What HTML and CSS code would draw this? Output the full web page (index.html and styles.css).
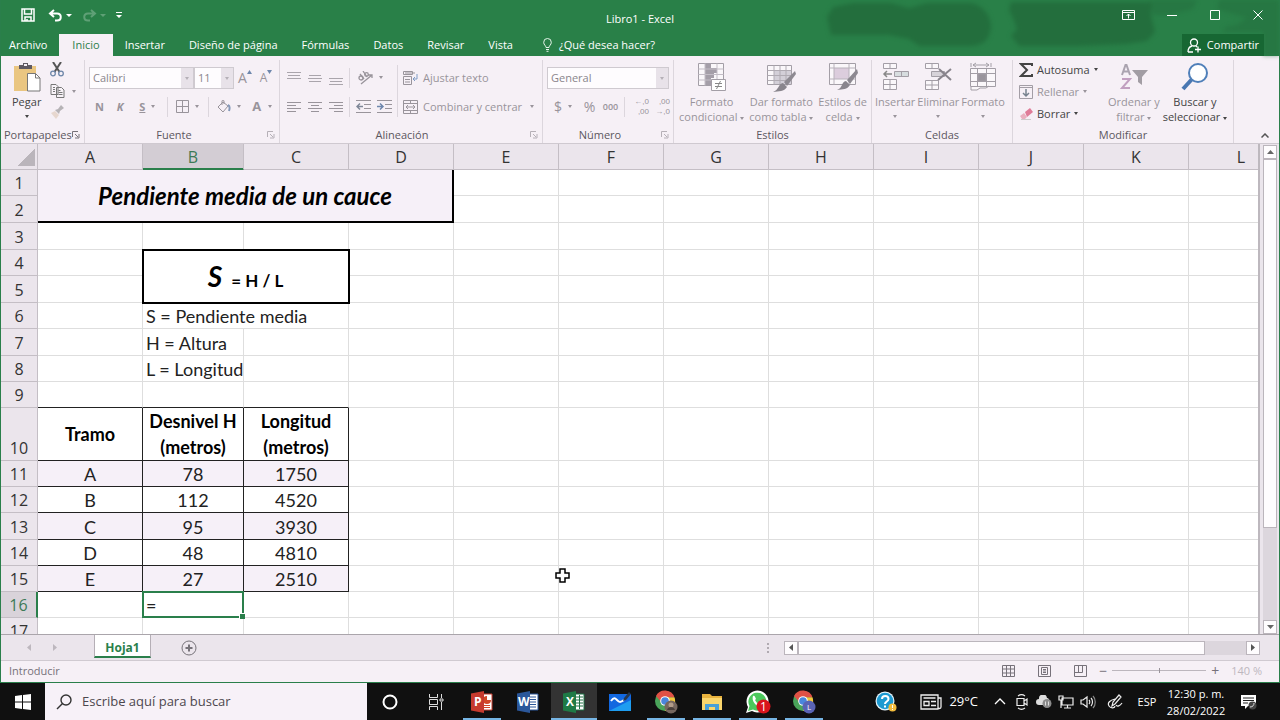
FILE: index.html
```html
<!DOCTYPE html>
<html lang="es">
<head>
  <meta charset="UTF-8">
  <meta name="viewport" content="width=device-width, initial-scale=1.0">
  <title>Libro1 - Excel</title>
  <link rel="stylesheet" href="styles.css">
</head>
<body>
  <div class="window">
    <!-- Barra de título -->
    <header class="top">
      <svg class="clouds" width="480" height="56" viewBox="0 0 480 56" fill="#236e3d"><path d="M34 7l20-4h38l18 5 18-5h44c12 2 20 13 20 24-2 14-8 18-20 19h-52l-10-7-20-4H32l-4-18z"/><path d="M212 2h140v14l4 16-8 9-20 3-48 2h-60l-8-10 6-7-4-11-4-8z"/><path d="M350 0h48l-4 9-24 6h-16zM420 0h60v56h-16V32h-40c0-4 6-7 12-6l12-8-30-9z" opacity="0.5"/></svg>
      <div class="title-bar">
        <div class="quick">
          <button class="save" aria-label="Guardar"><svg width="14" height="14" viewBox="0 0 14 14" fill="none" stroke="#fff" stroke-width="1.5"><path d="M1 1h12v12H1zM3.500 1v5h7V1M4 13V9h6v4M6 11v2"/></svg></button>
          <button class="undo" aria-label="Deshacer"><svg width="15" height="13" viewBox="0 0 15 13" fill="none" stroke="#fff" stroke-width="2"><path d="M6 1L2 4.500L6 8M2 4.500h7c5 0 5 7 0 7H7"/></svg><i class="caret"></i></button>
          <button class="undo dim" aria-label="Rehacer"><svg width="15" height="13" viewBox="0 0 15 13" fill="none" stroke="#fff" stroke-width="2"><path d="M9 1l4 3.500L9 8M13 4.500H6c-5 0-5 7 0 7h2"/></svg><i class="caret"></i></button>
          <button aria-label="Personalizar"><svg width="6" height="8" viewBox="0 0 6 8" fill="#fff"><path d="M0 1h6v1H0zM0 4h6L3 7z"/></svg></button>
        </div>
        <div class="doc-name">Libro1 - Excel</div>
        <div class="win-buttons">
          <button aria-label="Opciones de cinta"><svg width="13" height="10" viewBox="0 0 13 10" fill="none" stroke="#fff"><path d="M.5.5h12v9H.5zM.5 2.500h12M6.500 8.500V4M4.500 6l2-2 2 2"/></svg></button>
          <button aria-label="Minimizar"><svg width="10" height="10" viewBox="0 0 10 10" stroke="#fff"><path d="M0 5.500h10"/></svg></button>
          <button aria-label="Maximizar"><svg width="10" height="10" viewBox="0 0 10 10" fill="none" stroke="#fff"><path d="M.5.5h9v9h-9z"/></svg></button>
          <button aria-label="Cerrar"><svg width="10" height="10" viewBox="0 0 10 10" stroke="#fff"><path d="M.5.5l9 9M9.500.5l-9 9"/></svg></button>
        </div>
      </div>
      <nav class="tabs">
        <a href="#" class="file">Archivo</a>
        <a href="#" class="active">Inicio</a>
        <a href="#">Insertar</a>
        <a href="#">Diseño de página</a>
        <a href="#">Fórmulas</a>
        <a href="#">Datos</a>
        <a href="#">Revisar</a>
        <a href="#">Vista</a>
        <a href="#" class="tell"><svg width="9" height="14" viewBox="0 0 9 14" fill="none" stroke="#e6f3ea"><path d="M3 9.500C3 7.500.7 7 .7 4.300a3.800 3.800 0 0 1 7.600 0C8.300 7 6 7.500 6 9.500zM3 11.500h3M3.500 13.300h2"/></svg>¿Qué desea hacer?</a>
        <button class="share"><svg width="15" height="15" viewBox="0 0 15 15" fill="none" stroke="#fff" stroke-width="1.300"><circle cx="7" cy="4.500" r="3.500"/><path d="M1 14c0-4 2-5.500 4-6M1 14h5M9 8l1 1M11 8.500v6M8 11.500h6"/></svg>Compartir</button>
      </nav>
    </header>

    <!-- Cinta de opciones -->
    <section class="ribbon">
      <div class="group g-clip">
        <div class="group-body">
          <button class="big dark paste"><svg width="28" height="30" viewBox="0 0 28 30"><path d="M1 4h22v25H1z" fill="#eac681"/><path d="M6 3h4V1h5v2h4v4H6z" fill="#5f5a62"/><path d="M11 2h3v2h-3z" fill="#f5eff5"/><path d="M14.500 11.500h8l4.500 4.500v13H14.500z" fill="#fff" stroke="#777"/><path d="M22.500 11.500V16H27" fill="none" stroke="#777"/></svg><span>Pegar</span><i class="caret"></i></button>
          <div class="stack">
            <button aria-label="Cortar"><svg width="14" height="15" viewBox="0 0 14 15" fill="none"><path d="M3 0l6.500 10M11 0L4.500 10" stroke="#555" stroke-width="2"/><circle cx="3" cy="11.500" r="2.300" stroke="#6d86a8" stroke-width="1.300"/><circle cx="11" cy="11.500" r="2.300" stroke="#6d86a8" stroke-width="1.300"/></svg></button>
            <button aria-label="Copiar"><svg width="15" height="14" viewBox="0 0 15 14" fill="#f8f3f8" stroke="#777"><path d="M1 .5h5l2 2v8H1zM6.500 3.500h5l2.500 2.500v7.500H6.500z"/><path d="M3 3.500h2M3 5.500h2M3 7.500h2M8.500 6.500h2M8.500 8.500h4M8.500 10.500h4"/></svg><i class="caret"></i></button>
            <button class="dim" aria-label="Copiar formato"><svg width="14" height="14" viewBox="0 0 14 14"><path d="M1 8l4-2 4 4-3 4z" fill="#d9c0a9"/><path d="M5 5l3-1 3-4 3 3-4 3-1 3z" fill="#777"/></svg></button>
          </div>
        </div>
        <div class="group-label">Portapapeles<svg class="launch" viewBox="0 0 8 8"><path d="M.5 6V.5H6M3 3l3 3M7 3v4H3"/></svg></div>
      </div>

      <div class="group g-font">
        <div class="group-body rows">
          <div class="row">
            <span class="combo font-name"><select aria-label="Fuente" disabled><option>Calibri</option></select></span><span class="combo font-size"><select aria-label="Tamaño" disabled><option>11</option></select></span>
            <button class="size-btn" aria-label="Aumentar"><span class="grow">A</span><svg width="5" height="4" viewBox="0 0 5 4"><path d="M0 4l2.500-4L5 4z" fill="#6e87ad"/></svg></button>
            <button class="size-btn" aria-label="Reducir"><span>A</span><svg width="5" height="4" viewBox="0 0 5 4"><path d="M0 0h5L2.500 4z" fill="#6e87ad"/></svg></button>
          </div>
          <div class="row">
            <button class="b20"><b>N</b></button>
            <button class="b20"><b><em>K</em></b></button>
            <button class="b34"><b><u>S</u></b><i class="caret"></i></button>
            <span class="sep"></span>
            <button class="b34" aria-label="Bordes"><svg width="13" height="13" viewBox="0 0 13 13" fill="none" stroke="#99949b"><path d="M.5.5h12v12H.5zM6.500.5v12M.5 6.500h12"/></svg><i class="caret"></i></button>
            <span class="sep"></span>
            <button class="b34" aria-label="Relleno"><svg width="14" height="13" viewBox="0 0 14 13" fill="none" stroke="#99949b"><path d="M1 7l5-5 5 4-5 6zM5 5V1c0-1 2-1 2 0v3"/><path d="M11 5c2 1 2 3 1 6" stroke="#8498b8" stroke-width="2"/></svg><i class="caret"></i></button>
            <button class="b30"><b class="font-a">A</b><i class="caret"></i></button>
          </div>
        </div>
        <div class="group-label">Fuente<svg class="launch dim" viewBox="0 0 8 8"><path d="M.5 6V.5H6M3 3l3 3M7 3v4H3"/></svg></div>
      </div>

      <div class="group g-align">
        <div class="group-body">
          <div class="rows">
            <div class="row v-align">
              <button class="b20" aria-label="Arriba"><svg width="14" height="14" viewBox="0 0 14 14" stroke="#aaa5ac"><path d="M0 1.500h14M1 4.500h12M0 7.500h14"/></svg></button>
              <button class="b20" aria-label="Medio"><svg width="14" height="14" viewBox="0 0 14 14" stroke="#aaa5ac"><path d="M1 4.500h12M0 7.500h14M1 10.500h12"/></svg></button>
              <button class="b20" aria-label="Abajo"><svg width="14" height="14" viewBox="0 0 14 14" stroke="#aaa5ac"><path d="M0 7.500h14M1 10.500h12M0 13.500h14"/></svg></button>
              <span class="sep"></span>
              <button class="b34" aria-label="Orientación"><svg width="15" height="14" viewBox="0 0 15 14" fill="none" stroke="#99949b" stroke-width="1.300"><path d="M3 13L14 4M10 4h4v3"/><circle cx="3" cy="7" r="2"/><path d="M2 3l4 5M5 0l4 6"/><circle cx="8.500" cy="3.500" r="1.800"/></svg><i class="caret"></i></button>
            </div>
            <div class="row">
              <button class="b20" aria-label="Izquierda"><svg width="14" height="12" viewBox="0 0 14 12" stroke="#99949b"><path d="M0 1.500h14M0 4.500h9M0 7.500h14M0 10.500h9"/></svg></button>
              <button class="b20" aria-label="Centro"><svg width="14" height="12" viewBox="0 0 14 12" stroke="#99949b"><path d="M0 1.500h14M3 4.500h8M0 7.500h14M3 10.500h8"/></svg></button>
              <button class="b20" aria-label="Derecha"><svg width="14" height="12" viewBox="0 0 14 12" stroke="#99949b"><path d="M0 1.500h14M5 4.500h9M0 7.500h14M5 10.500h9"/></svg></button>
              <span class="sep"></span>
              <button class="b20" aria-label="Menos sangría"><svg width="15" height="13" viewBox="0 0 15 13" fill="none" stroke="#99949b"><path d="M0 .5h15M8 4.500h7M8 8.500h7M0 12.500h15"/><path d="M7 6.500H1M4 3.500l-3 3 3 3" stroke="#7f8798" stroke-width="1.500"/></svg></button>
              <button class="b20" aria-label="Más sangría"><svg width="15" height="13" viewBox="0 0 15 13" fill="none" stroke="#99949b"><path d="M0 .5h15M8 4.500h7M8 8.500h7M0 12.500h15"/><path d="M0 6.500h6M3 3.500l3 3-3 3" stroke="#6e87ad" stroke-width="1.500"/></svg></button>
            </div>
          </div>
          <span class="sep tall"></span>
          <div class="rows">
            <button class="row text-btn"><svg width="15" height="14" viewBox="0 0 15 14" fill="none" stroke="#99949b"><path d="M.5.5h9v3h-9zM2 2h10M.5 5.500h8v8h-8zM2 8.500h5M2 11h5"/><path d="M14 3v5h-4M12 6l-2 2 2 2" stroke="#7f9bc4"/></svg>Ajustar texto</button>
            <button class="row text-btn"><svg width="15" height="14" viewBox="0 0 15 14" fill="none" stroke="#99949b"><path d="M.5.5h14v13H.5zM.5 3.500h14M.5 10.500h14M7.500.5v3M7.500 10.500v3M3 7h9M5 5L3 7l2 2M10 5l2 2-2 2"/></svg>Combinar y centrar<i class="caret"></i></button>
          </div>
        </div>
        <div class="group-label">Alineación<svg class="launch dim" viewBox="0 0 8 8"><path d="M.5 6V.5H6M3 3l3 3M7 3v4H3"/></svg></div>
      </div>

      <div class="group g-number">
        <div class="group-body rows">
          <div class="row"><span class="combo format"><select aria-label="Formato de número" disabled><option>General</option></select></span></div>
          <div class="row">
            <button class="b34 money">$<i class="caret"></i></button>
            <button class="b20 percent">%</button>
            <button class="b20 zeros">000</button>
            <span class="sep"></span>
            <button class="b20 decimals"><span>←,0</span><span>,00</span></button>
            <button class="b20 decimals"><span>,00</span><span>→,0</span></button>
          </div>
        </div>
        <div class="group-label">Número<svg class="launch dim" viewBox="0 0 8 8"><path d="M.5 6V.5H6M3 3l3 3M7 3v4H3"/></svg></div>
      </div>

      <div class="group g-styles">
        <div class="group-body">
          <button class="big"><svg width="30" height="30" viewBox="0 0 30 30"><path d="M1.500 1.500h25v22h-25z" fill="#faf7fa" stroke="#a39ea6"/><path d="M8 1h6v22H8zM14 6h6v5h-6zM14 11h3v5h-3z" fill="#a49ea8"/><path d="M1.500 7h25M1.500 12.500h25M1.500 18h25M8 1.500v22M20 1.500v22" stroke="#c3bdc6" fill="none"/><path d="M14.500 17.500h14v11h-14z" fill="#fff" stroke="#a39ea6"/><path d="M18 21.500h7M18 24.500h7M23.500 19l-4 8" stroke="#888" fill="none"/></svg><span>Formato</span><span>condicional <i class="caret"></i></span></button>
          <button class="big"><svg width="30" height="30" viewBox="0 0 30 30"><path d="M1.500 3.500h24v19h-24z" fill="#faf7fa" stroke="#a39ea6"/><path d="M8 9h17v13H8z" fill="#d3cfd8"/><path d="M1.500 8.500h24M1.500 13.500h24M1.500 18.500h24M8 3.500v19M14 3.500v19M20 3.500v19" stroke="#b0abb3" fill="none"/><path d="M29 9L18 20l3 4L30 12z" fill="#8d8991"/><path d="M17 21l4 4c-3 5-8 4-14 5 6-2 5-8 10-9z" fill="#89858d"/></svg><span>Dar formato</span><span>como tabla <i class="caret"></i></span></button>
          <button class="big"><svg width="30" height="30" viewBox="0 0 30 30"><path d="M1.500 1.500h26v21h-26z" fill="#faf7fa" stroke="#a39ea6"/><path d="M6 6h15v11H6z" fill="#dccddd"/><path d="M1.500 6h26M1.500 17h26M6 1.500v21M21 1.500v21" stroke="#b8b2bb" fill="none"/><path d="M29 7L19 18l3 4L30 11z" fill="#8d8991"/><path d="M18 19l4 4c-3 5-7 4-13 5 6-2 4-8 9-9z" fill="#89858d"/></svg><span>Estilos de</span><span>celda <i class="caret"></i></span></button>
        </div>
        <div class="group-label">Estilos</div>
      </div>

      <div class="group g-cells">
        <div class="group-body">
          <button class="big"><svg width="28" height="30" viewBox="0 0 28 30" fill="#faf7fa" stroke="#a39ea6"><path d="M2.500 1.500h13v5h-13zM9 1.500v5M2.500 17.500h13v10h-13zM2.500 22.500h13M9 17.500v10"/><path d="M13.500 9.500h14v5h-14zM20.500 9.500v5" fill="#d7dddf"/><path d="M11 12H3M6 9l-3 3 3 3" fill="none" stroke="#888" stroke-width="1.500"/></svg><span>Insertar</span><i class="caret"></i></button>
          <button class="big"><svg width="28" height="30" viewBox="0 0 28 30" fill="#faf7fa" stroke="#a39ea6"><path d="M1.500 1.500h13v5h-13zM8 1.500v5M1.500 18.500h13v9h-13zM1.500 23h13M8 18.500v9"/><path d="M7.500 9.500h13v5h-13z" fill="#d7d3d9"/><path d="M15 7l12 11M27 7L14 18" fill="none" stroke="#88848c" stroke-width="2"/></svg><span>Eliminar</span><i class="caret"></i></button>
          <button class="big"><svg width="28" height="30" viewBox="0 0 28 30" fill="#faf7fa" stroke="#a39ea6"><path d="M1.500 6.500h25v18h-25zM1.500 11.500h25M1.500 19.500h25M8.500 6.500v18M17.500 6.500v18M2 25v3h6l3-2h6l3-2M2 1v4M22 1v4M4 3h16M7 1L4 3l3 2M17 1l3 2-3 2"/><path d="M9 12h8v7H9z" fill="#99949c"/></svg><span>Formato</span><i class="caret"></i></button>
        </div>
        <div class="group-label">Celdas</div>
      </div>

      <div class="group g-edit">
        <div class="group-body">
          <div class="edit-list">
            <button class="dark"><svg width="14" height="14" viewBox="0 0 14 14" fill="none" stroke="#444" stroke-width="2"><path d="M13 3V1H2l6 6-6 6h11v-2"/></svg>Autosuma<i class="caret"></i></button>
            <button><svg width="14" height="14" viewBox="0 0 14 14" fill="none" stroke="#a39ea6"><path d="M.5.5h13v13H.5zM.5 2.500h13"/><path d="M7 4v7M4 8l3 3 3-3" stroke="#77828f" stroke-width="1.500"/></svg>Rellenar<i class="caret"></i></button>
            <button class="dark"><svg width="14" height="14" viewBox="0 0 14 14"><path d="M6 5l5-4 3 4-6 5z" fill="#df7c98"/><path d="M1 9l4-3 3 4-2 2H3z" fill="#e9b0bf"/><path d="M2 12.500h10" stroke="#ccc"/></svg>Borrar<i class="caret"></i></button>
          </div>
          <button class="big"><svg width="28" height="30" viewBox="0 0 28 30" fill="none"><path d="M2 13L5.500 3h1L10 13M3.500 9.500h5" stroke="#aaa3af" stroke-width="2"/><path d="M2 17h8L2 26h8" stroke="#c19fc0" stroke-width="2"/><path d="M12 8h16l-6 7v8l-4-3v-5z" fill="#a29da4"/></svg><span>Ordenar y</span><span>filtrar <i class="caret"></i></span></button>
          <button class="big dark"><svg width="28" height="30" viewBox="0 0 28 30"><path d="M2 27L12 16" stroke="#4977b1" stroke-width="4"/><circle cx="17" cy="11" r="9" fill="#fff" stroke="#4f7fb9" stroke-width="2"/></svg><span>Buscar y</span><span>seleccionar <i class="caret"></i></span></button>
        </div>
        <div class="group-label">Modificar</div>
      </div>
      <button class="collapse" aria-label="Contraer"><svg width="8" height="5" viewBox="0 0 8 5" fill="none" stroke="#555" stroke-width="1.500"><path d="M.5 4.500L4 1l3.500 3.500"/></svg></button>
    </section>

    <!-- Hoja de cálculo -->
    <main class="sheet">
      <div class="grid-wrap">
        <table class="grid">
          <colgroup><col class="c-num"><col class="c"><col class="c-b"><col class="c"><col class="c"><col class="c"><col class="c"><col class="c"><col class="c"><col class="c"><col class="c"><col class="c"><col class="c"></colgroup>
          <thead>
            <tr><th class="corner"></th><th>A</th><th class="sel">B</th><th>C</th><th>D</th><th>E</th><th>F</th><th>G</th><th>H</th><th>I</th><th>J</th><th>K</th><th>L</th></tr>
          </thead>
          <tbody>
            <tr><th>1</th><td class="sheet-title" colspan="4" rowspan="2">Pendiente media de un cauce</td><td></td><td></td><td></td><td></td><td></td><td></td><td></td><td></td></tr>
            <tr class="h27"><th>2</th><td></td><td></td><td></td><td></td><td></td><td></td><td></td><td></td></tr>
            <tr class="h27"><th>3</th><td></td><td></td><td></td><td></td><td></td><td></td><td></td><td></td><td></td><td></td><td></td><td></td></tr>
            <tr><th>4</th><td></td><td class="formula" colspan="2" rowspan="2"><em>S</em> = H / L</td><td></td><td></td><td></td><td></td><td></td><td></td><td></td><td></td><td></td></tr>
            <tr class="h27"><th>5</th><td></td><td></td><td></td><td></td><td></td><td></td><td></td><td></td><td></td><td></td></tr>
            <tr><th>6</th><td></td><td class="left" colspan="2">S = Pendiente media</td><td></td><td></td><td></td><td></td><td></td><td></td><td></td><td></td><td></td></tr>
            <tr class="h27"><th>7</th><td></td><td class="left">H = Altura</td><td></td><td></td><td></td><td></td><td></td><td></td><td></td><td></td><td></td><td></td></tr>
            <tr><th>8</th><td></td><td class="left">L = Longitud</td><td></td><td></td><td></td><td></td><td></td><td></td><td></td><td></td><td></td><td></td></tr>
            <tr class="above"><th>9</th><td></td><td></td><td></td><td></td><td></td><td></td><td></td><td></td><td></td><td></td><td></td><td></td></tr>
            <tr class="data head"><th>10</th><td>Tramo</td><td>Desnivel H<br>(metros)</td><td>Longitud<br>(metros)</td><td></td><td></td><td></td><td></td><td></td><td></td><td></td><td></td><td></td></tr>
            <tr class="data tint"><th>11</th><td>A</td><td>78</td><td>1750</td><td></td><td></td><td></td><td></td><td></td><td></td><td></td><td></td><td></td></tr>
            <tr class="data"><th>12</th><td>B</td><td>112</td><td>4520</td><td></td><td></td><td></td><td></td><td></td><td></td><td></td><td></td><td></td></tr>
            <tr class="data tint h27"><th>13</th><td>C</td><td>95</td><td>3930</td><td></td><td></td><td></td><td></td><td></td><td></td><td></td><td></td><td></td></tr>
            <tr class="data"><th>14</th><td>D</td><td>48</td><td>4810</td><td></td><td></td><td></td><td></td><td></td><td></td><td></td><td></td><td></td></tr>
            <tr class="data tint"><th>15</th><td>E</td><td>27</td><td>2510</td><td></td><td></td><td></td><td></td><td></td><td></td><td></td><td></td><td></td></tr>
            <tr><th class="sel-row">16</th><td></td><td class="left editing">=</td><td></td><td></td><td></td><td></td><td></td><td></td><td></td><td></td><td></td><td></td></tr>
            <tr><th>17</th><td></td><td></td><td></td><td></td><td></td><td></td><td></td><td></td><td></td><td></td><td></td><td></td></tr>
          </tbody>
        </table>
        <svg class="pointer" width="15" height="15" viewBox="0 0 15 15"><path d="M5 1h5v4h4v5h-4v4H5v-4H1V5h4z" fill="#fff" stroke="#000" stroke-width="1.500"/></svg>
      </div>
      <div class="v-scroll">
        <button aria-label="Subir"><svg width="7" height="4" viewBox="0 0 7 4"><path d="M0 4l3.500-4L7 4z" fill="#666"/></svg></button>
        <div class="thumb"></div>
        <div class="track"></div>
        <button aria-label="Bajar"><svg width="7" height="4" viewBox="0 0 7 4"><path d="M0 0h7L3.500 4z" fill="#666"/></svg></button>
      </div>
    </main>

    <div class="sheet-tabs">
      <div class="arrows"><svg width="4" height="7" viewBox="0 0 4 7"><path d="M4 0v7L0 3.500z"/></svg><svg width="4" height="7" viewBox="0 0 4 7"><path d="M0 0v7l4-3.500z"/></svg></div>
      <button class="sheet-tab">Hoja1</button>
      <button class="add" aria-label="Hoja nueva"><svg width="16" height="16" viewBox="0 0 16 16" fill="none" stroke="#77737a"><circle cx="8" cy="8" r="7"/><path d="M8 4.500v7M4.500 8h7" stroke-width="2"/></svg></button>
      <div class="h-scroll">
        <svg class="grip" width="2" height="10" viewBox="0 0 2 10"><path d="M0 0h2v2H0zM0 4h2v2H0zM0 8h2v2H0z"/></svg>
        <button aria-label="Izquierda"><svg width="4" height="7" viewBox="0 0 4 7"><path d="M4 0v7L0 3.500z" fill="#555"/></svg></button>
        <div class="thumb"></div>
        <div class="track"></div>
        <button aria-label="Derecha"><svg width="4" height="7" viewBox="0 0 4 7"><path d="M0 0v7l4-3.500z" fill="#555"/></svg></button>
      </div>
    </div>

    <footer class="status">
      <span>Introducir</span>
      <div class="views">
        <button aria-label="Normal"><svg width="13" height="12" viewBox="0 0 13 12" fill="none" stroke="#77727a"><path d="M.5.5h12v11H.5zM.5 4h12M.5 8h12M4.500.5v11M8.500.5v11"/></svg></button>
        <button aria-label="Diseño"><svg width="13" height="12" viewBox="0 0 13 12" fill="none" stroke="#77727a"><path d="M.5.5h12v11H.5zM3.500 2.500h6v7h-6zM5 4.500h3M5 6h3M5 7.500h3"/></svg></button>
        <button aria-label="Saltos"><svg width="13" height="12" viewBox="0 0 13 12" fill="none" stroke="#77727a"><path d="M.5.5h12v11H.5zM.5 7.500h8v-7M4.500.5v7"/></svg></button>
      </div>
      <div class="zoom">
        <button>−</button><input type="range" min="0" max="100" value="50" aria-label="Zoom"><button>+</button>
      </div>
      <span class="zoom-value">140 %</span>
    </footer>
  </div>

  <!-- Barra de tareas -->
  <div class="taskbar">
    <button class="start" aria-label="Inicio"><svg width="16" height="16" viewBox="0 0 16 16" fill="#fff"><path d="M0 2l7-1v6.500H0zM8 1l8-1v7.500H8zM0 8.500h7V15l-7-1zM8 8.500h8V16l-8-1z"/></svg></button>
    <label class="search"><svg width="16" height="16" viewBox="0 0 16 16" fill="none" stroke="#333" stroke-width="1.400"><circle cx="10" cy="6" r="5"/><path d="M6.500 9.500L1 15"/></svg><input type="text" placeholder="Escribe aquí para buscar" aria-label="Buscar"></label>
    <button class="app" aria-label="Cortana"><svg width="16" height="16" viewBox="0 0 16 16" fill="none" stroke="#fff" stroke-width="2"><circle cx="8" cy="8" r="6.500"/></svg></button>
    <button class="app" aria-label="Vista de tareas"><svg width="16" height="16" viewBox="0 0 16 16" fill="none" stroke="#ddd"><path d="M1.500 0v3.500h8V0M1.500 5.500h8v5h-8zM1.500 16v-3.500h8V16M13.500 0v4M13.500 8v8M12 5h3v2h-3z"/></svg></button>
    <button class="app open" aria-label="PowerPoint"><svg width="22" height="22" viewBox="0 0 22 22"><path d="M11 3h10v16H11z" fill="#fff" stroke="#c43e31"/><path d="M16 5v4h4a4 4 0 1 1-4-4zM13 14h6v1h-6zM13 16h6v1h-6z" fill="#d24726"/><path d="M0 2.500L13 0v22L0 19.500z" fill="#c63a2e"/><text x="3" y="15" class="logo">P</text></svg></button>
    <button class="app" aria-label="Word"><svg width="22" height="22" viewBox="0 0 22 22"><path d="M11 3h10v16H11z" fill="#fff" stroke="#2b579a"/><path d="M13 6h6M13 8.500h6M13 11h6M13 13.500h6M13 16h6" stroke="#2b579a"/><path d="M0 2.500L13 0v22L0 19.500z" fill="#2b579a"/><text x="1" y="15" class="logo">W</text></svg></button>
    <button class="app open current" aria-label="Excel"><svg width="22" height="22" viewBox="0 0 22 22"><path d="M11 3h10v16H11z" fill="#fff" stroke="#1f7145"/><path d="M13 6h7M13 9h7M13 12h7M13 15h7M16.500 4v14" stroke="#1f7145"/><path d="M0 2.500L13 0v22L0 19.500z" fill="#1f7a46"/><text x="3" y="15" class="logo">X</text></svg></button>
    <button class="app" aria-label="Pizarra"><svg width="24" height="20" viewBox="0 0 24 20"><path d="M1 2h22v17H1z" fill="#1268e0"/><path d="M1 19L23 8v11z" fill="#1e9df0"/><path d="M3 9c3-4 4-3 6-1s3 3 7 0" fill="none" stroke="#fff" stroke-width="2"/><path d="M15 9l1-3 5-6 2 2-5 6z" fill="#26364c"/></svg></button>
    <button class="app open" aria-label="Chrome"><svg width="24" height="24" viewBox="0 0 24 24"><circle cx="11" cy="11" r="10" fill="#4aa45a"/><path d="M2 6a10 10 0 0 1 18.500 1.500H11L8 13z" fill="#e05145"/><path d="M20.500 7.500A10 10 0 0 1 11 21l4-8-2-5.500z" fill="#f2c83b"/><circle cx="11" cy="11" r="4.800" fill="#fff"/><circle cx="11" cy="11" r="3.800" fill="#4a86dc"/><circle cx="17" cy="17" r="6.500" fill="#76675f"/><circle cx="17" cy="15" r="2.500" fill="#b29b89"/><path d="M13 20c1-4 7-4 8 0z" fill="#493f3b"/></svg></button>
    <button class="app open" aria-label="Explorador"><svg width="22" height="20" viewBox="0 0 22 20"><path d="M1 2h8l2 2h10v14H1z" fill="#e9b33e"/><path d="M1 6h20v12H1z" fill="#fbd66d"/><path d="M4 18v-6h14v6h-4v-3H8v3z" fill="#4aa0d8"/></svg></button>
    <button class="app open" aria-label="WhatsApp"><svg width="26" height="24" viewBox="0 0 26 24"><path d="M1 23l2-6A11 11 0 1 1 7 21z" fill="#fff"/><path d="M3 21l1.500-5a9 9 0 1 1 3.500 3.500z" fill="#4bc95c"/><path d="M8 6c1-1 2 0 3 3l-1 1c1 2 2 3 4 4l1-1c3 1 3 2 1 3-4 2-10-5-8-10z" fill="#fff"/><circle cx="18.500" cy="16.500" r="7" fill="#d9141c"/><text x="15" y="21" class="badge">1</text></svg></button>
    <button class="app open" aria-label="Chrome L"><svg width="24" height="24" viewBox="0 0 24 24"><circle cx="11" cy="11" r="10" fill="#4aa45a"/><path d="M2 6a10 10 0 0 1 18.500 1.500H11L8 13z" fill="#e05145"/><path d="M20.500 7.500A10 10 0 0 1 11 21l4-8-2-5.500z" fill="#f2c83b"/><circle cx="11" cy="11" r="4.800" fill="#fff"/><circle cx="11" cy="11" r="3.800" fill="#4a86dc"/><circle cx="17" cy="17" r="6.500" fill="#5a64b4"/><text x="15" y="20" class="small">L</text></svg></button>

    <div class="tray">
      <button class="help" aria-label="Ayuda"><svg width="22" height="22" viewBox="0 0 22 22"><circle cx="10" cy="10" r="9.500" fill="#e6f5fc"/><circle cx="10" cy="10" r="8.300" fill="#1d9ad1"/><path d="M7 8c0-4 6.500-4 6.500 0 0 2.500-3.500 2.500-3.500 5M10 14.500v2" fill="none" stroke="#fff" stroke-width="2"/><circle cx="17.500" cy="16.500" r="4" fill="#f4bd3c"/><path d="M17.500 14v3M17.500 18v1" stroke="#fff"/></svg></button>
      <button class="weather"><svg width="22" height="16" viewBox="0 0 22 16" fill="none" stroke="#eee" stroke-width="1.300"><path d="M1 1h17v14H1zM18 4h3v9c0 2-3 2-3 0M3.500 4h12M4 7.500h5v4H4zM11 7.500h5M11 11.500h5"/></svg>29°C</button>
      <button class="chev" aria-label="Ocultos"><svg width="12" height="7" viewBox="0 0 12 7" fill="none" stroke="#fff" stroke-width="1.300"><path d="M1 6l5-5 5 5"/></svg></button>
      <button class="t" aria-label="Reunirse"><svg width="12" height="16" viewBox="0 0 12 16" fill="none" stroke="#eee" stroke-width="1.200"><path d="M1 4.500h7v7H1zM8 7l3-2v6L8 9M2 2c2-1.500 5-1.500 7 0M2 14c2 1.500 5 1.500 7 0"/></svg></button>
      <button class="t" aria-label="OneDrive"><svg width="16" height="13" viewBox="0 0 16 13"><path d="M3 10a3 3 0 0 1 0-6 4 4 0 0 1 8-1c3 0 4 7 0 7z" fill="#ddd"/><circle cx="11" cy="8.500" r="4.500" fill="#8b8b8b"/><path d="M9.500 6.500v4M12.500 6.500v4" stroke="#ddd"/></svg></button>
      <button class="t" aria-label="Red"><svg width="16" height="14" viewBox="0 0 16 14" fill="none" stroke="#eee" stroke-width="1.200"><path d="M4 3h11v7H4zM9.500 10v3M6 13h7M1 1h4v4H1zM3 5v8"/></svg></button>
      <button class="t" aria-label="Volumen"><svg width="16" height="14" viewBox="0 0 16 14" fill="none" stroke="#eee" stroke-width="1.200"><path d="M1 5h2l4-3v10L3 9H1zM9 5c1 1 1 3 0 4M11 3c2 2 2 6 0 8"/><path d="M13 1c3 3 3 9 0 12" stroke="#888"/></svg></button>
      <button class="pen" aria-label="Lápiz"><svg width="16" height="15" viewBox="0 0 16 15" fill="none" stroke="#eee" stroke-width="1.200"><path d="M5 12l1-4 6-7 2 2-6 7zM8 5C3 6 0 9 2 12s6 2 6 0M9 11c1 2 4 1 6-2"/></svg></button>
      <button class="lang">ESP</button>
      <button class="clock"><span>12:30 p. m.</span><span>28/02/2022</span></button>
      <button class="notes" aria-label="Notificaciones"><svg width="17" height="16" viewBox="0 0 17 16"><path d="M1 1h15v11H8l-3 3v-3H1z" fill="#fff"/><path d="M3 4h11M3 6.500h11M3 9h5" stroke="#222"/><circle cx="12.500" cy="11.500" r="4" fill="#444"/><path d="M10 13c3 0 4-2 4-4" stroke="#ddd" fill="none"/></svg></button>
    </div>
  </div>
</body>
</html>
```

FILE: styles.css
```css
* {
  box-sizing: border-box;
}
body {
  display: flex;
  flex-direction: column;
  height: 100vh;
  margin: 0;
  overflow: hidden;
  font-family: "Open Sans", "Noto Sans", sans-serif;
  font-size: 11px;
  line-height: 15px;
  color: #444;
}
button {
  display: flex;
  align-items: center;
  justify-content: center;
  padding: 0;
  border: none;
  background: none;
  font: inherit;
  color: inherit;
  cursor: pointer;
  white-space: nowrap;
}
svg {
  display: block;
  flex: none;
}
a {
  color: inherit;
  text-decoration: none;
}
.caret {
  display: inline-block;
  flex: none;
  border: 3px solid transparent;
  border-top-color: currentColor;
  border-bottom: none;
  vertical-align: middle;
}
.window {
  display: flex;
  flex-direction: column;
  flex: 1;
  min-height: 0;
  border: 1px solid #2a7f4b;
  border-top: none;
  background: #f6f0f6;
}

/* Barra de título y pestañas */
.top {
  position: relative;
  z-index: 0;
  color: #fff;
  background: #298048;
}
.clouds {
  position: absolute;
  top: 0;
  right: 0;
  z-index: -1;
  filter: blur(2px);
}
.title-bar {
  display: grid;
  grid-template-columns: 1fr auto 1fr;
  align-items: center;
  height: 34px;
}
.quick {
  display: flex;
  gap: 10px;
  padding: 0 0 4px 20px;
}
.quick .save {
  margin-right: 3px;
}
.quick .undo {
  gap: 3px;
}
.quick .dim {
  opacity: 0.25;
}
.doc-name {
  padding-top: 3px;
}
.win-buttons {
  display: flex;
  justify-content: flex-end;
  padding-bottom: 4px;
}
.win-buttons button {
  width: 43px;
}
.tabs {
  display: flex;
  align-items: stretch;
  height: 22px;
  line-height: 22px;
}
.tabs a {
  padding: 0 12px;
}
.tabs .file {
  padding: 0 12px 0 8px;
}
.tabs .active {
  padding: 0 13px;
  background: #f6f0f6;
  color: #2a7f4b;
}
.tabs .tell {
  display: flex;
  align-items: center;
  gap: 7px;
  padding-left: 18px;
}
.share {
  gap: 5px;
  width: 82px;
  margin: 0 15px 0 auto;
  background: #176733;
}

/* Cinta */
.ribbon {
  display: flex;
  height: 88px;
  padding-top: 4px;
  border-bottom: 1px solid #cfc9d0;
  color: #99949b;
}
.group {
  display: flex;
  flex-direction: column;
  flex: none;
  border-right: 1px solid #dcd6dd;
}
.group-body {
  display: flex;
  height: 66px;
}
.group-label {
  position: relative;
  height: 17px;
  line-height: 17px;
  text-align: center;
  color: #5c575e;
}
.launch {
  position: absolute;
  right: 4px;
  bottom: 4px;
  width: 8px;
  height: 8px;
  fill: none;
  stroke: #77727a;
}
.dim {
  opacity: 0.5;
}
.dark {
  color: #444;
}
.rows {
  display: flex;
  flex-direction: column;
  gap: 6px;
  padding-top: 6px;
}
.row {
  display: flex;
  align-items: center;
  height: 23px;
}
.row .caret, .stack .caret {
  border-width: 2px;
  border-top-width: 3px;
  border-bottom: none;
}
.b20 {
  width: 21px;
  height: 22px;
}
.b30, .b34 {
  width: 34px;
  height: 22px;
  gap: 7px;
}
.b34 {
  gap: 6px;
}
.sep {
  width: 1px;
  height: 20px;
  margin: 0 3px;
  background: #dcd6dd;
}
.sep.tall {
  height: 52px;
  margin: 5px 5px 0 2px;
}
.g-clip { width: 84px; }
.g-font { width: 195px; }
.g-align { width: 263px; }
.g-number { width: 131px; }
.g-styles { width: 198px; }
.g-cells { width: 141px; }
.g-edit { width: 221px; }
.g-clip .group-body { gap: 9px; padding-left: 11px; }
.g-clip .group-label { padding-left: 3px; text-align: left; }
.g-font .group-body { padding-left: 4px; }
.g-align .group-body { padding-left: 3px; }
.g-align .group-label { padding-right: 18px; }
.g-number .group-body { padding-left: 4px; }
.g-font .group-label, .g-number .group-label { padding-right: 16px; }
.g-styles .group-body { gap: 5px; padding-left: 5px; }
.g-cells .group-body { gap: 2px; padding-left: 3px; }
.g-edit .group-body { gap: 3px; padding-left: 6px; }

.big {
  flex-direction: column;
  justify-content: flex-start;
  padding-top: 2px;
}
.big svg {
  margin-bottom: 2px;
}
.big .caret {
  border-width: 2px;
  border-top-width: 3px;
  border-bottom: none;
}
.big > .caret {
  margin-top: 6px;
}
.stack {
  display: flex;
  flex-direction: column;
  gap: 7px;
  padding-top: 2px;
}
.stack button {
  justify-content: flex-start;
  gap: 7px;
}
.combo {
  position: relative;
  height: 22px;
}
.combo select {
  width: 100%;
  height: 100%;
  padding: 0 3px;
  border: 1px solid #cfcad0;
  border-radius: 0;
  background: #fefcfe;
  font: inherit;
  color: #8a858c;
  opacity: 1;
  appearance: none;
}
.combo::before {
  content: "";
  position: absolute;
  top: 1px;
  right: 1px;
  bottom: 1px;
  width: 12px;
  background: #e8e2e9;
}
.combo::after {
  content: "";
  position: absolute;
  top: 10px;
  right: 5px;
  border: 2px solid transparent;
  border-top: 3px solid #b5b0b7;
  border-bottom: none;
}
.font-name { width: 105px; }
.font-size { width: 40px; }
.format { width: 122px; }
.size-btn {
  align-items: flex-start;
  width: 20px;
  margin-left: 1px;
  font-size: 12px;
}
.size-btn .grow {
  font-size: 14px;
}
.font-a {
  font-size: 13px;
}
.text-btn {
  justify-content: flex-start;
  gap: 5px;
}
.text-btn .caret {
  margin-left: 3px;
}
.money, .percent {
  font-size: 14px;
}
.money {
  width: 32px;
}
.zeros {
  font-size: 9px;
  font-weight: 600;
}
.decimals {
  flex-direction: column;
  align-items: flex-end;
  font-family: "Liberation Sans", sans-serif;
  font-size: 8px;
  line-height: 10px;
}
.edit-list {
  display: flex;
  flex-direction: column;
  align-items: flex-start;
  gap: 7px;
  width: 86px;
  padding-top: 2px;
}
.edit-list button {
  gap: 4px;
}
.edit-list .caret {
  border-width: 2px;
  border-top-width: 3px;
  border-bottom: none;
}
.collapse {
  align-self: flex-end;
  margin: 0 10px 5px auto;
}

/* Hoja */
.sheet {
  display: flex;
  flex: 1;
  min-height: 0;
  background: #ebe5ec;
}
.grid-wrap {
  position: relative;
  flex: 1;
  overflow: hidden;
  border-right: 2px solid #bdb8be;
}
.grid {
  width: 1293px;
  table-layout: fixed;
  border-collapse: separate;
  border-spacing: 0;
  background: #fff;
  font-family: Lato, "Open Sans", sans-serif;
  font-size: 18px;
  color: #222;
}
.c-num { width: 37px; }
.c { width: 105px; }
.c-b { width: 101px; }
.grid th, .grid td {
  height: 26px;
  padding: 1px 0 0;
  border-right: 1px solid #dedede;
  border-bottom: 1px solid #dedede;
  line-height: 24px;
  text-align: center;
  white-space: nowrap;
}
.grid th {
  border-color: #c4bec5;
  background: #ebe5ec;
  font-family: "Open Sans", sans-serif;
  font-size: 16px;
  font-weight: 400;
  color: #333;
}
.grid thead th {
  padding-top: 0;
}
.grid .h27 > * {
  height: 27px;
}
.grid .corner {
  background: linear-gradient(135deg, transparent 50%, #bab5bb 50%) no-repeat 16px 5px / 18px 17px #ebe5ec;
}
.grid .sel {
  background: #d3cdd4;
  box-shadow: inset 0 -1px #2a7f4b;
  border-bottom-color: #2a7f4b;
  color: #3d7a56;
}
.grid .sel-row {
  border-right: 2px solid #2a7f4b;
  background: #d9d3da;
  color: #3d7a56;
}
.grid .sheet-title {
  border-right: 2px solid #000;
  border-bottom: 2px solid #000;
  background: #f6f0f8;
  font-size: 24px;
  font-weight: 700;
  font-style: italic;
  color: #000;
}
.grid .formula {
  padding-top: 5px;
  outline: 2px solid #000;
  outline-offset: -1px;
  border-color: #000;
  font-size: 17px;
  font-weight: 700;
  color: #000;
}
.formula em {
  margin-right: 5px;
  font-size: 28px;
}
.grid .left {
  padding-left: 3px;
  text-align: left;
}
.above td:nth-child(-n+4) {
  border-bottom-color: #222;
}
.data td:nth-child(-n+4) {
  border-right-color: #222;
  border-bottom-color: #222;
}
.tint td:nth-child(-n+4) {
  background: #f6f0f8;
}
.grid .head > * {
  height: 53px;
  padding-top: 0;
  line-height: 26px;
}
.head td {
  font-weight: 700;
  color: #000;
}
.grid .head th {
  vertical-align: bottom;
  line-height: 24px;
}
.grid .editing {
  position: relative;
}
.editing::before {
  content: "";
  position: absolute;
  inset: -1px;
  border: 2px solid #2a7f4b;
}
.editing::after {
  content: "";
  position: absolute;
  right: -2px;
  bottom: -2px;
  width: 5px;
  height: 5px;
  border: 1px solid #fff;
  border-width: 1px 0 0 1px;
  background: #2a7f4b;
}
.pointer {
  position: absolute;
  left: 554px;
  top: 424px;
}
.v-scroll {
  display: flex;
  flex-direction: column;
  width: 14px;
  margin: 1px 2px 0 3px;
}
.v-scroll button, .h-scroll button, .thumb {
  border: 1px solid #bbb5bc;
  background: #fefcfe;
}
.v-scroll button {
  height: 14px;
}
.v-scroll .thumb {
  flex: 4;
}
.track {
  background: #dcd6dd;
}
.v-scroll .track {
  flex: 1;
}

/* Pestañas de hoja */
.sheet-tabs {
  display: flex;
  align-items: center;
  height: 27px;
  border-top: 1px solid #aaa5ab;
  border-bottom: 1px solid #d0cad1;
  background: #ebe5ec;
}
.arrows {
  display: flex;
  gap: 22px;
  width: 93px;
  padding-left: 26px;
  fill: #bdb7be;
}
.sheet-tab {
  align-self: flex-start;
  width: 57px;
  height: 23px;
  padding-top: 3px;
  border: 1px solid #b5afb6;
  border-top: none;
  border-bottom: 2px solid #2a7f4b;
  background: #fff;
  font-size: 12px;
  font-weight: 700;
  color: #2a7f4b;
}
.add {
  margin-left: 30px;
}
.h-scroll {
  display: flex;
  align-items: center;
  width: 39%;
  height: 14px;
  margin: 0 19px 0 auto;
}
.h-scroll button {
  width: 14px;
  height: 14px;
}
.grip {
  margin: 0 15px 0 5px;
  fill: #b0aab1;
}
.h-scroll .thumb {
  flex: 10;
  height: 14px;
}
.h-scroll .track {
  flex: 1;
  height: 14px;
}

/* Barra de estado */
.status {
  display: flex;
  align-items: center;
  height: 21px;
  padding: 0 17px 2px 8px;
  color: #77727a;
}
.views {
  display: flex;
  gap: 23px;
  margin-left: auto;
}
.zoom {
  display: flex;
  align-items: center;
  gap: 5px;
  margin: 0 12px;
  font-size: 14px;
}
.zoom input {
  width: 94px;
  height: 12px;
  margin: 0;
  background: linear-gradient(#bcb6bd, #bcb6bd) no-repeat center / 100% 1px;
  appearance: none;
}
.zoom input::-webkit-slider-thumb {
  width: 1px;
  height: 5px;
  background: #99939a;
  appearance: none;
}
.zoom-value {
  color: #bdb7be;
}

/* Barra de tareas */
.taskbar {
  display: flex;
  height: 37px;
  background: #101010;
  color: #fff;
}
.start {
  width: 45px;
}
.search {
  display: flex;
  align-items: center;
  gap: 10px;
  width: 322px;
  padding-left: 11px;
  background: #f7f1f8;
}
.search input {
  flex: 1;
  min-width: 0;
  padding: 0;
  border: none;
  outline: none;
  background: none;
  font: inherit;
  font-size: 13px;
}
.search input::placeholder {
  color: #4c474e;
  opacity: 1;
}
.app {
  position: relative;
  width: 46px;
}
.app.current {
  background: #333;
}
.app.open::after {
  content: "";
  position: absolute;
  left: 4px;
  right: 4px;
  bottom: 0;
  height: 2px;
  background: #76b5e4;
}
.app.current::after {
  left: 0;
  right: 0;
}
.logo {
  font: bold 12px "Open Sans", sans-serif;
  fill: #fff;
}
.badge {
  font: 12px "Open Sans", sans-serif;
  fill: #fff;
}
.small {
  font: 8px "Open Sans", sans-serif;
  fill: #fff;
}
.tray {
  display: flex;
  margin-left: auto;
  padding-right: 13px;
}
.help {
  width: 24px;
  margin-right: 22px;
}
.weather {
  gap: 7px;
  font-size: 13px;
}
.chev {
  width: 33px;
  padding-left: 11px;
}
.t {
  width: 22px;
}
.pen {
  width: 32px;
}
.lang {
  width: 32px;
}
.clock {
  flex-direction: column;
  width: 66px;
  line-height: 17px;
}
.notes {
  width: 38px;
}
```
